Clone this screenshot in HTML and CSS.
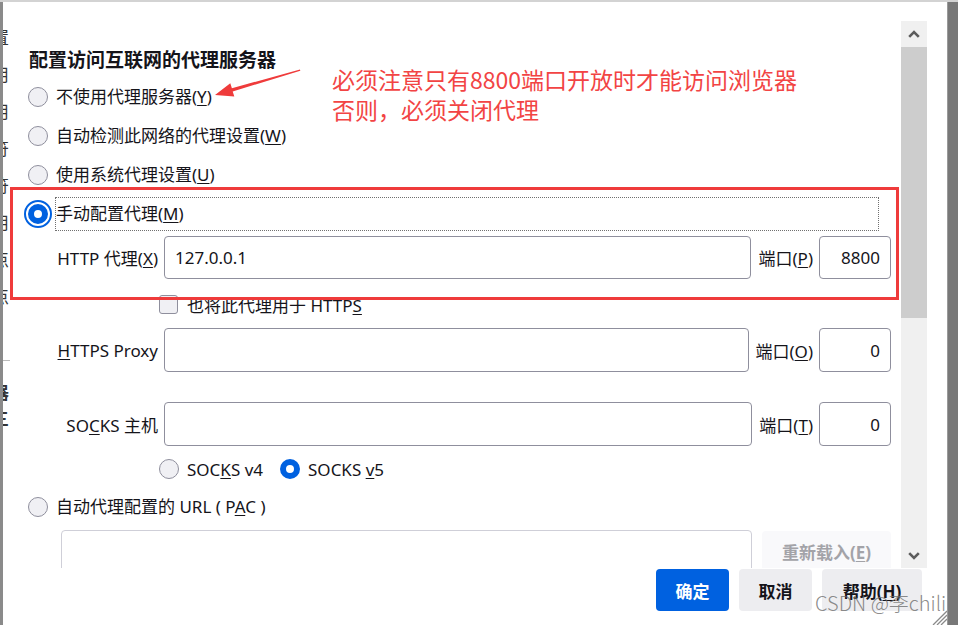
FILE: index.html
```html
<!DOCTYPE html>
<html lang="zh-CN">
<head>
<meta charset="utf-8">
<title>连接设置</title>
<link rel="stylesheet" href="styles.css">
</head>
<body>
<div class="screen">
  <div class="topline"></div>
  <div class="frame">
    <div class="backpage">
      <div class="backtext">置<br>用<br>用<br>符<br>符<br>用<br>点<br>点</div>
      <div class="backrule"></div>
      <div class="backtext bold">器<br>三</div>
    </div>
    <div class="dialog">
      <div class="main">
        <div class="content">
          <h1 class="heading">配置访问互联网的代理服务器</h1>
          <div class="radio-row r-first"><span class="radio"></span><span class="rlabel">不使用代理服务器(<u>Y</u>)</span></div>
          <div class="radio-row"><span class="radio"></span><span class="rlabel">自动检测此网络的代理设置(<u>W</u>)</span></div>
          <div class="radio-row"><span class="radio"></span><span class="rlabel">使用系统代理设置(<u>U</u>)</span></div>
          <div class="radio-row manual"><span class="radio checked focused"></span><span class="focus-label">手动配置代理(<u>M</u>)</span></div>

          <div class="field http">
            <span class="field-label">HTTP 代理(<u>X</u>)</span>
            <div class="input">127.0.0.1</div>
            <span class="port-label">端口(<u>P</u>)</span>
            <div class="input port">8800</div>
          </div>

          <div class="check-row">
            <span class="checkbox"></span>
            <span class="clabel">也将此代理用于 HTTP<u>S</u></span>
          </div>

          <div class="field https">
            <span class="field-label"><u>H</u>TTPS Proxy</span>
            <div class="input"></div>
            <span class="port-label">端口(<u>O</u>)</span>
            <div class="input port">0</div>
          </div>

          <div class="field socks">
            <span class="field-label">SO<u>C</u>KS 主机</span>
            <div class="input"></div>
            <span class="port-label">端口(<u>T</u>)</span>
            <div class="input port">0</div>
          </div>

          <div class="version-row">
            <span class="radio"></span><span class="vlabel">SOC<u>K</u>S v4</span>
            <span class="radio checked"></span><span class="vlabel">SOCKS <u>v</u>5</span>
          </div>

          <div class="radio-row pac"><span class="radio"></span><span class="rlabel">自动代理配置的 URL ( P<u>A</u>C )</span></div>

          <div class="pac-area">
            <div class="textarea"></div>
            <div class="reload">重新载入(<u>E</u>)</div>
          </div>
        </div>
        <div class="scrollbar">
          <div class="sb-btn up">
            <svg width="12" height="8" viewBox="0 0 12 8"><polyline points="1.2,6.8 6,2 10.8,6.8" fill="none" stroke="#5c5c5c" stroke-width="2.6"/></svg>
          </div>
          <div class="sb-thumb"></div>
          <div class="sb-track"></div>
          <div class="sb-btn down">
            <svg width="12" height="8" viewBox="0 0 12 8"><polyline points="1.2,1.2 6,6 10.8,1.2" fill="none" stroke="#5c5c5c" stroke-width="2.6"/></svg>
          </div>
        </div>
        <div class="gutter"></div>
      </div>
      <div class="footer">
        <button class="btn primary">确定</button>
        <button class="btn">取消</button>
        <button class="btn help">帮助(<u>H</u>)</button>
      </div>
    </div>
    <div class="rightstrip"></div>
  </div>

  <div class="redbox"></div>
  <div class="note">必须注意只有8800端口开放时才能访问浏览器<br>否则，必须关闭代理</div>
  <svg class="arrow" width="958" height="625" viewBox="0 0 958 625">
    <polygon points="300,69.4 231.9,88.3 230.3,83.2 215,95 234.3,96.6 232.7,91.4 300.3,70.7" fill="#ef3b3b"/>
  </svg>
  <div class="watermark">CSDN @李chili</div>
  <svg class="grip" width="16" height="16" viewBox="0 0 16 16">
    <line x1="2" y1="16" x2="16" y2="2" stroke="#8a8a8a" stroke-width="1.3"/>
    <line x1="6" y1="16" x2="16" y2="6" stroke="#8a8a8a" stroke-width="1.3"/>
    <line x1="10" y1="16" x2="16" y2="10" stroke="#8a8a8a" stroke-width="1.3"/>
  </svg>
</div>
</body>
</html>
```

FILE: styles.css
```css
* { box-sizing: border-box; }
html, body { margin: 0; padding: 0; }
body {
  width: 958px;
  height: 625px;
  overflow: hidden;
  background: #ffffff;
  font-family: "Noto Sans", "Noto Sans CJK SC", sans-serif;
  font-size: 17px;
  color: #15141a;
}
u { text-decoration: underline; text-underline-offset: 2px; text-decoration-thickness: 1px; }

.screen {
  position: relative;
  width: 958px;
  height: 625px;
  display: flex;
  flex-direction: column;
}
.topline { flex: none; height: 2px; background: #d3d3d3; }
.frame { flex: 1; display: flex; min-height: 0; }

/* page behind the dialog */
.backpage {
  flex: none;
  width: 10px;
  border-left: 3px solid #8a8a8a;
  overflow: hidden;
  padding-top: 16px;
}
.backtext {
  margin-left: -11px;
  font-family: "Noto Sans CJK SC", sans-serif;
  font-size: 17px;
  line-height: 37px;
  color: #333;
}
.backtext.bold { font-weight: 700; line-height: 26px; margin-top: 18px; }
.backrule { height: 1px; background: #bbb; margin-top: 46px; }

/* dialog */
.dialog {
  flex: none;
  width: 937px;
  display: flex;
  flex-direction: column;
  padding-top: 19px;
}
.main { flex: none; height: 547px; display: flex; }
.content { width: 891px; overflow: hidden; }

.heading {
  margin: 26px 0 0 0;
  padding-left: 19px;
  height: 24px;
  font-family: "Noto Sans CJK SC", sans-serif;
  font-size: 19px;
  font-weight: 700;
  line-height: 24px;
}

.radio-row {
  display: flex;
  align-items: center;
  height: 30px;
  margin-top: 9px;
  padding-left: 18px;
}
.radio-row.r-first { margin-top: 11px; }
.radio-row.manual { height: 34px; margin-top: 7px; padding-right: 22px; }
.radio-row.pac { margin-top: 10px; }
.rlabel { margin-left: 8px; line-height: 24px; white-space: nowrap; }

.radio {
  flex: none;
  width: 20px;
  height: 20px;
  border-radius: 50%;
  border: 1px solid #8f8f9d;
  background: #f0f0f4;
}
.radio.checked { border: 6px solid #0061e0; background: #ffffff; }
.radio.focused { outline: 2px solid #0061e0; outline-offset: 2px; }

.focus-label {
  flex: 1;
  height: 34px;
  margin-left: 7px;
  border: 1px dotted #707070;
  display: flex;
  align-items: center;
  line-height: 24px;
}

/* fields */
.field {
  display: flex;
  align-items: center;
  gap: 6px;
  padding-left: 46px;
  padding-right: 10px;
  height: 44px;
}
.field.http { height: 43px; margin-top: 5px; }
.field.https { margin-top: 11px; }
.field.socks { margin-top: 30px; }
.field-label { flex: none; width: 102px; text-align: right; white-space: nowrap; }
.input {
  flex: 1;
  height: 100%;
  border: 1px solid #8f8f9d;
  border-radius: 4px;
  background: #fff;
  display: flex;
  align-items: center;
  padding-left: 10px;
  padding-right: 10px;
}
.input.port { flex: none; width: 72px; justify-content: flex-end; }
.port-label { flex: none; white-space: nowrap; margin-left: 1px; }

.check-row {
  display: flex;
  align-items: center;
  height: 26px;
  margin-top: 12px;
  padding-left: 149px;
}
.checkbox {
  flex: none;
  width: 19px;
  height: 19px;
  border: 1px solid #8f8f9d;
  border-radius: 3px;
  background: #f0f0f4;
}
.clabel { margin-left: 9px; }

.version-row {
  display: flex;
  align-items: center;
  height: 26px;
  margin-top: 10px;
  padding-left: 149px;
}
.vlabel { margin-left: 8px; margin-right: 17px; white-space: nowrap; }

.pac-area {
  display: flex;
  gap: 10px;
  height: 60px;
  margin-top: 8px;
  padding-left: 51px;
  padding-right: 10px;
}
.textarea {
  flex: 1;
  border: 1px solid #cfcfd8;
  border-radius: 4px;
}
.reload {
  flex: none;
  width: 129px;
  margin-top: 1px;
  border-radius: 4px;
  background: #f9f9fb;
  color: #a3a3a8;
  font-weight: 700;
  text-align: center;
  padding-top: 10px;
  line-height: 24px;
}

/* scrollbar */
.scrollbar {
  flex: none;
  width: 26px;
  background: #f0f0f0;
  display: flex;
  flex-direction: column;
}
.sb-btn { flex: none; height: 26px; display: flex; align-items: center; justify-content: center; }
.sb-btn.down { height: 25px; }
.sb-thumb { flex: none; height: 271px; background: #cdcdcd; }
.sb-track { flex: 1; }
.gutter { flex: none; width: 20px; }

/* footer */
.footer {
  flex: none;
  height: 57px;
  display: flex;
  justify-content: flex-end;
  gap: 10px;
  padding: 1px 25px 0 0;
}
.btn {
  height: 42px;
  width: 73px;
  border: none;
  border-radius: 4px;
  background: #ededf0;
  color: #15141a;
  font-family: "Noto Sans", "Noto Sans CJK SC", sans-serif;
  font-size: 17px;
  font-weight: 700;
  padding: 0;
}
.btn.primary { background: #0061e0; color: #ffffff; }
.btn.help { width: 100px; }

.rightstrip {
  flex: none;
  width: 11px;
  background: #787878;
  border-left: 1px solid #9a9a9a;
}

/* overlays */
.redbox {
  position: absolute;
  left: 10px;
  top: 187px;
  width: 889px;
  height: 113px;
  border: 3px solid #ef3b3b;
}
.note {
  position: absolute;
  left: 332px;
  top: 64px;
  font-family: "Noto Sans CJK SC", sans-serif;
  font-size: 23px;
  line-height: 30px;
  color: #f24444;
  white-space: nowrap;
}
.arrow { position: absolute; left: 0; top: 0; pointer-events: none; }
.watermark {
  position: absolute;
  left: 815px;
  top: 591px;
  font-family: "Noto Sans CJK SC", sans-serif;
  font-size: 20px;
  font-weight: 300;
  line-height: 24px;
  color: rgba(110, 110, 110, 0.8);
  white-space: nowrap;
}
.grip { position: absolute; left: 931px; top: 609px; }
```
